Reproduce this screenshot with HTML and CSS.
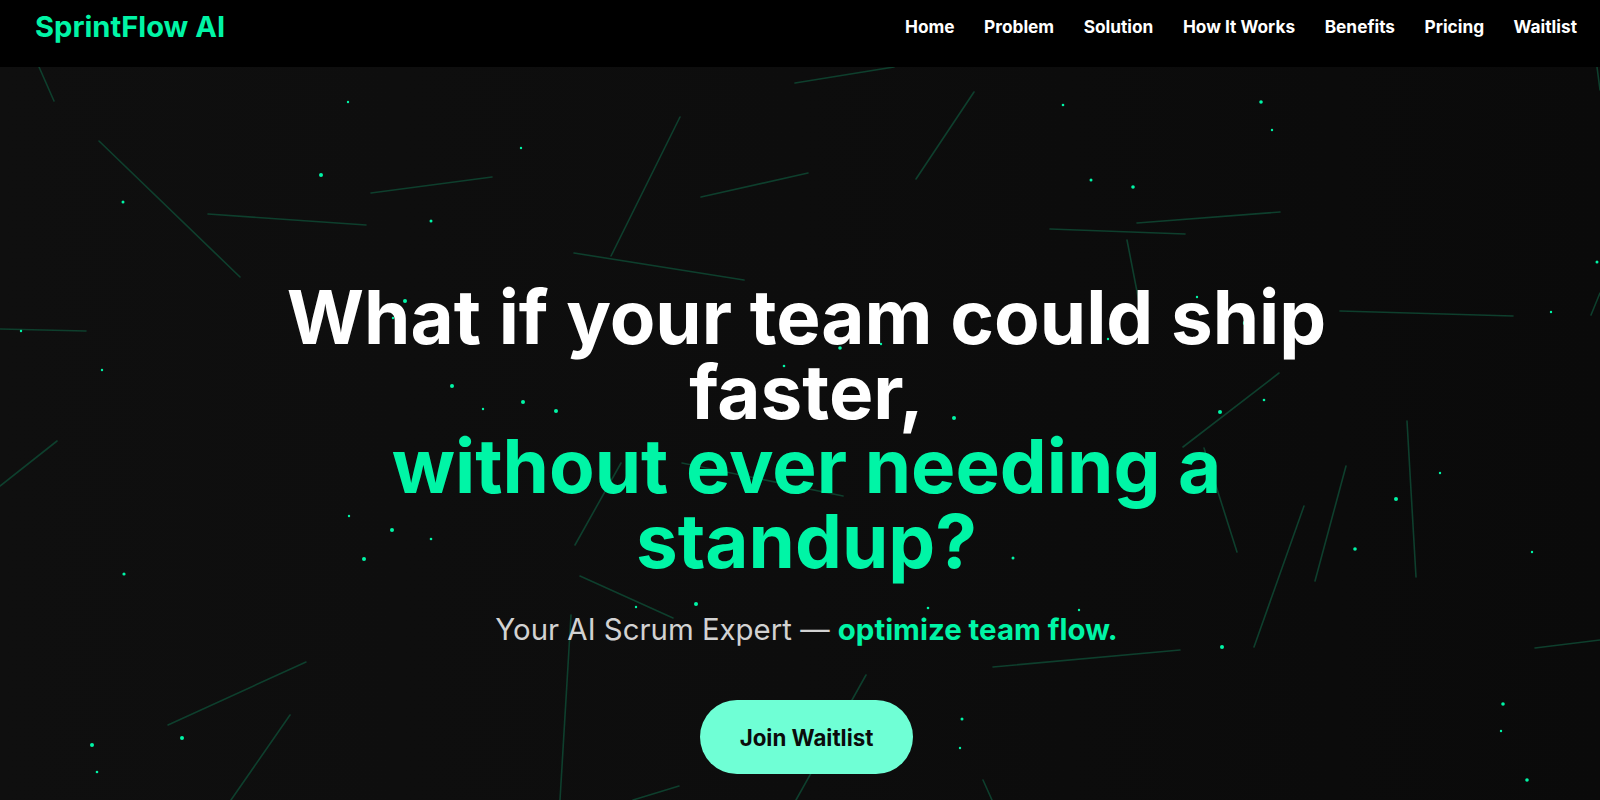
FILE: index.html
```html
<!DOCTYPE html>
<html lang="en">
<head>
<meta charset="utf-8">
<title>SprintFlow AI</title>
<link rel="stylesheet" href="styles.css">
</head>
<body>
<header class="nav">
  <a class="logo" href="#">SprintFlow AI</a>
  <nav class="links">
    <a href="#">Home</a>
    <a href="#">Problem</a>
    <a href="#">Solution</a>
    <a href="#">How It Works</a>
    <a href="#">Benefits</a>
    <a href="#">Pricing</a>
    <a href="#">Waitlist</a>
  </nav>
</header>
<main class="hero">
  <svg class="bg" viewBox="0 67 1600 733" preserveAspectRatio="xMinYMin slice" aria-hidden="true">
    <g class="lines">
      <line x1="39" y1="67" x2="54" y2="101"/>
      <line x1="99" y1="141" x2="240" y2="277"/>
      <line x1="208" y1="214" x2="366" y2="225"/>
      <line x1="371" y1="193" x2="492" y2="177"/>
      <line x1="0" y1="329" x2="86" y2="331"/>
      <line x1="57" y1="441" x2="0" y2="486"/>
      <line x1="306" y1="662" x2="168" y2="725"/>
      <line x1="290" y1="715" x2="231" y2="800"/>
      <line x1="795" y1="83" x2="894" y2="67"/>
      <line x1="680" y1="117" x2="611" y2="256"/>
      <line x1="701" y1="197" x2="808" y2="173"/>
      <line x1="916" y1="179" x2="974" y2="92"/>
      <line x1="574" y1="253" x2="744" y2="280"/>
      <line x1="1050" y1="229" x2="1185" y2="234"/>
      <line x1="1137" y1="223" x2="1280" y2="212"/>
      <line x1="1127" y1="240" x2="1140" y2="307"/>
      <line x1="1340" y1="311" x2="1513" y2="316"/>
      <line x1="1597" y1="67" x2="1600" y2="90"/>
      <line x1="1591" y1="315" x2="1600" y2="293"/>
      <line x1="1279" y1="373" x2="1183" y2="447"/>
      <line x1="1204" y1="448" x2="1237" y2="552"/>
      <line x1="1304" y1="506" x2="1254" y2="647"/>
      <line x1="1346" y1="466" x2="1315" y2="581"/>
      <line x1="1407" y1="421" x2="1416" y2="577"/>
      <line x1="1180" y1="650" x2="993" y2="667"/>
      <line x1="1535" y1="648" x2="1600" y2="640"/>
      <line x1="682" y1="463" x2="843" y2="496"/>
      <line x1="621" y1="463" x2="575" y2="545"/>
      <line x1="580" y1="576" x2="673" y2="618"/>
      <line x1="571" y1="615" x2="560" y2="800"/>
      <line x1="866" y1="675" x2="796" y2="800"/>
      <line x1="633" y1="800" x2="679" y2="786"/>
      <line x1="983" y1="780" x2="992" y2="800"/>
    </g>
    <g class="dots">
      <circle cx="348" cy="102" r="1.2"/>
      <circle cx="321" cy="175" r="2"/>
      <circle cx="123" cy="202" r="1.5"/>
      <circle cx="431" cy="221" r="1.5"/>
      <circle cx="21" cy="331" r="1.2"/>
      <circle cx="405" cy="301" r="2"/>
      <circle cx="378" cy="299" r="1.2"/>
      <circle cx="393" cy="318" r="1.2"/>
      <circle cx="521" cy="148" r="1.2"/>
      <circle cx="1063" cy="105" r="1.3"/>
      <circle cx="1091" cy="180" r="1.5"/>
      <circle cx="1261" cy="102" r="1.8"/>
      <circle cx="1272" cy="130" r="1.2"/>
      <circle cx="1133" cy="187" r="1.8"/>
      <circle cx="1597" cy="262" r="1.5"/>
      <circle cx="1551" cy="312" r="1.2"/>
      <circle cx="1197" cy="297" r="1.2"/>
      <circle cx="1245" cy="323" r="2.2"/>
      <circle cx="102" cy="370" r="1.2"/>
      <circle cx="452" cy="386" r="2"/>
      <circle cx="523" cy="402" r="2"/>
      <circle cx="483" cy="409" r="1.2"/>
      <circle cx="556" cy="411" r="2"/>
      <circle cx="349" cy="516" r="1.2"/>
      <circle cx="392" cy="530" r="2"/>
      <circle cx="431" cy="539" r="1.3"/>
      <circle cx="364" cy="559" r="2"/>
      <circle cx="124" cy="574" r="1.6"/>
      <circle cx="182" cy="738" r="2"/>
      <circle cx="92" cy="745" r="2"/>
      <circle cx="97" cy="772" r="1.3"/>
      <circle cx="1220" cy="412" r="2"/>
      <circle cx="1264" cy="400" r="1.3"/>
      <circle cx="1396" cy="499" r="2"/>
      <circle cx="1440" cy="473" r="1.2"/>
      <circle cx="1355" cy="549" r="1.8"/>
      <circle cx="1532" cy="552" r="1.2"/>
      <circle cx="1222" cy="647" r="2"/>
      <circle cx="1503" cy="704" r="1.8"/>
      <circle cx="1527" cy="780" r="1.8"/>
      <circle cx="1079" cy="610" r="1.2"/>
      <circle cx="696" cy="604" r="2"/>
      <circle cx="636" cy="607" r="1.2"/>
      <circle cx="928" cy="608" r="1.3"/>
      <circle cx="954" cy="418" r="2"/>
      <circle cx="1108" cy="339" r="1.2"/>
      <circle cx="840" cy="348" r="1.8"/>
      <circle cx="881" cy="344" r="1.2"/>
      <circle cx="784" cy="366" r="1.3"/>
      <circle cx="962" cy="719" r="1.5"/>
      <circle cx="960" cy="748" r="1.2"/>
      <circle cx="1013" cy="558" r="1.5"/>
      <circle cx="1501" cy="731" r="1.2"/>
    </g>
  </svg>
  <div class="hero-content">
    <h1 class="title">What if your team could ship faster, <span class="accent">without ever needing a standup?</span></h1>
    <p class="subtitle">Your AI Scrum Expert — <strong class="accent-strong">optimize team flow.</strong></p>
    <a class="cta" href="#">Join Waitlist</a>
  </div>
</main>
</body>
</html>
```

FILE: styles.css
```css
* { box-sizing: border-box; }

html, body {
  margin: 0;
  padding: 0;
  background: #0d0d0d;
  font-family: "Inter", "Liberation Sans", sans-serif;
  overflow: hidden;
}

a { text-decoration: none; }

.nav {
  height: 67px;
  padding: 0 23px 14px 35px;
  background: #000;
  display: flex;
  align-items: center;
  justify-content: space-between;
}

.logo {
  color: #00f5a6;
  font-size: 29.1px;
  line-height: 34px;
  font-weight: 700;
}

.links {
  display: flex;
  gap: 29.5px;
}

.links a {
  color: #fff;
  font-size: 17.3px;
  line-height: 20px;
  font-weight: 700;
}

.hero {
  position: relative;
  min-height: 733px;
  background: linear-gradient(90deg, #0f0f0f 0%, #0d0d0d 50%, #0a0a0a 100%);
  overflow: hidden;
}

.bg {
  position: absolute;
  inset: 0;
  width: 100%;
  height: 100%;
}

.lines line {
  stroke: #0e3f2d;
  stroke-width: 1.6;
  stroke-linecap: round;
}

.dots circle {
  fill: #00f5a6;
}

.hero-content {
  position: relative;
  z-index: 1;
  padding: 213px 0 0 13px;
  display: flex;
  flex-direction: column;
  align-items: center;
  text-align: center;
}

.title {
  margin: 0;
  max-width: 1100px;
  color: #fff;
  font-size: 74.5px;
  line-height: 74.5px;
  font-weight: 700;
}

.accent {
  display: block;
  color: #00f5a6;
}

.subtitle {
  margin: 30px 0 0;
  color: #d2d2d2;
  font-size: 29.4px;
  line-height: 44px;
  font-weight: 400;
}

.accent-strong {
  color: #00f5a6;
  font-weight: 700;
}

.cta {
  margin-top: 48px;
  padding: 23.5px 40px;
  border-radius: 999px;
  background: #6fffd5;
  color: #0b0b0b;
  font-size: 22.3px;
  line-height: 27px;
  font-weight: 700;
}
```
